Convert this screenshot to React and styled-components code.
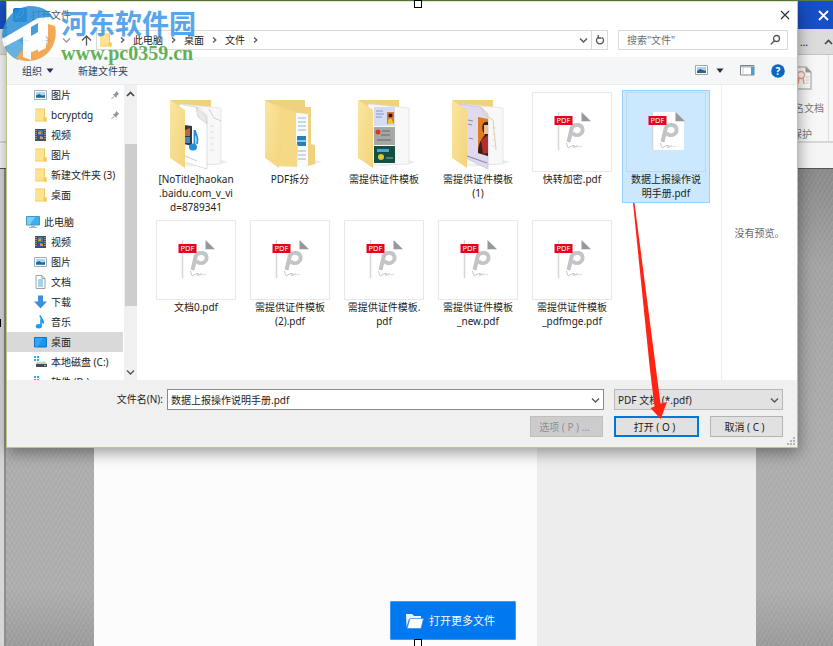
import React from 'react';
import styled, { createGlobalStyle, css } from 'styled-components';

const GlobalStyle = createGlobalStyle`
  * { box-sizing: border-box; }
  html, body { margin: 0; }
  body, button, input, select {
    font-family: "Noto Sans", "Noto Sans CJK SC", sans-serif;
    font-size: 10px;
    line-height: 14px;
    color: #222;
  }
  button { padding: 0; border: 0; background: none; cursor: pointer; }
  svg { display: block; flex: none; }
`;

/* ---------- application window behind the dialog ---------- */

const Page = styled.div`
  position: relative;
  min-height: 100vh;
  display: flex;
  flex-direction: column;
  overflow: hidden;
  background: #d6d6d6;
`;

const AppTitleBar = styled.header`
  height: 29px;
  padding-right: 4px;
  display: flex;
  align-items: center;
  justify-content: flex-end;
  background: #174fc4;
  border-top: 1px solid #5f7d3c;
`;

const AppTabs = styled.div`
  height: 26px;
  display: flex;
  align-items: center;
  justify-content: flex-end;
  gap: 16px;
  background: #dcdcdc;
  border-bottom: 1px solid #c4c4c4;
`;

const Ribbon = styled.div`
  height: 88px;
  display: flex;
  justify-content: flex-end;
  background: #f7f7f7;
  border-bottom: 2px solid #d8d8d8;
`;

const RibbonGroup = styled.div`
  width: 48px;
  margin-right: 4px;
  padding: 11px 4px 0 0;
  display: flex;
  flex-direction: column;
  align-items: flex-end;
  border-right: 1px solid #dedede;
  color: #777;
`;

const RibbonIcon = styled.span`
  padding-right: 12px;
`;

const RibbonText = styled.span`
  margin-top: ${(p) => p.$gap}px;
  padding-right: ${(p) => p.$inset || 0}px;
  white-space: nowrap;
`;

const SubBar = styled.div`
  height: 26px;
  background: #f5f5f5;
  border-bottom: 1px solid #555;
`;

const Workspace = styled.main`
  flex: 1;
  display: flex;
  margin-left: 4px;
  padding: 0 77px 0 88px;
  border-left: 2px solid #8f8f8f;
  background:
    repeating-linear-gradient(60deg, #00000008 0 1px, transparent 1px 4px),
    repeating-linear-gradient(-60deg, #ffffff14 0 1px, transparent 1px 4px),
    linear-gradient(#8a8a8a, #a4a4a4 20%, #aeaeae 60%, #aeaeae 88%, #9c9c9c);
`;

const StartPanel = styled.section`
  flex: 1;
  display: flex;
  flex-direction: column;
  justify-content: flex-end;
  align-items: flex-end;
  padding: 0 21px 6px;
  background: #fcfcfc;
`;

const SidePanel = styled.aside`
  width: 219px;
  background: #ededed;
`;

const OpenMore = styled.button`
  width: 126px;
  height: 39px;
  padding-right: 6px;
  display: flex;
  align-items: center;
  justify-content: center;
  gap: 5px;
  background: #0078f0;
  border: 1px solid #3b98f5;
  border-radius: 1px;
  color: #f4f9ff;
  font-size: 11px;
`;

/* ---------- dialog ---------- */

const Dialog = styled.section`
  position: absolute;
  top: 1px;
  left: 6px;
  right: 35px;
  display: flex;
  flex-direction: column;
  background: #fff;
  border: 1px solid #b5c78c;
  border-top-color: #dfe6cf;
  box-shadow: 1px 5px 14px #00000060;
`;

const TitleBar = styled.header`
  height: 25px;
  padding: 0 7px 0 6px;
  display: flex;
  align-items: center;
  gap: 4px;
  color: #555;
`;

const CloseButton = styled.button`
  margin-left: auto;
`;

const NavBar = styled.div`
  height: 30px;
  padding: 0 9px 4px 12px;
  display: flex;
  align-items: center;
  gap: 10px;
`;

const NavButtons = styled.div`
  width: 73px;
  display: flex;
  align-items: center;
  justify-content: space-between;
`;

const AddressBar = styled.nav`
  flex: 1;
  height: 20px;
  margin-left: -6px;
  padding-left: 2px;
  display: flex;
  align-items: center;
  border: 1px solid #d9d9d9;
`;

const Crumb = styled.a`
  color: #222;
  text-decoration: none;
`;

const CrumbMark = styled.span`
  width: 21px;
  display: flex;
  justify-content: center;
`;

const AddressTools = styled.div`
  margin-left: auto;
  height: 100%;
  display: flex;
  align-items: center;
`;

const AddressTool = styled.button`
  width: 16px;
  height: 100%;
  display: flex;
  align-items: center;
  justify-content: center;
  border-left: 1px solid ${(p) => (p.$divided ? '#d9d9d9' : 'transparent')};
`;

const SearchBox = styled.label`
  width: 170px;
  height: 20px;
  padding: 0 6px 0 8px;
  display: flex;
  align-items: center;
  border: 1px solid #d9d9d9;
`;

const SearchInput = styled.input`
  flex: 1;
  min-width: 0;
  padding: 0;
  border: 0;
  outline: 0;
  background: none;
  &::placeholder { color: #6d6d6d; opacity: 1; }
`;

const Toolbar = styled.div`
  height: 28px;
  padding: 0 12px 0 15px;
  display: flex;
  align-items: center;
  background: #f5f6f7;
  border-bottom: 1px solid #e8ebee;
`;

const ToolButton = styled.button`
  display: flex;
  align-items: center;
  gap: 4px;
  margin-right: ${(p) => p.$after || 0}px;
  color: #2a3e5c;
`;

const ToolSpacer = styled.span`
  flex: 1;
`;

const Browser = styled.div`
  height: 295px;
  display: flex;
`;

const Sidebar = styled.div`
  width: 130px;
  display: flex;
  overflow: hidden;
`;

const Tree = styled.ul`
  flex: 1;
  min-width: 0;
  margin: 0;
  padding: 0;
  list-style: none;
`;

const TreeItem = styled.li`
  height: 20px;
  margin-top: ${(p) => (p.$root ? 7 : 0)}px;
  padding: 0 3px 0 ${(p) => (p.$root ? 19 : 27)}px;
  display: flex;
  align-items: center;
  gap: 4px;
  white-space: nowrap;
  background: ${(p) => (p.$active ? '#d9d9d9' : 'transparent')};
`;

const TreeName = styled.span`
  flex: 1;
`;

const ScrollTrack = styled.div`
  width: 13px;
  display: flex;
  flex-direction: column;
  align-items: center;
  background: #f0f0f0;
  margin-left: 1px;
`;

const ScrollEnd = styled.button`
  height: 17px;
  display: flex;
  align-items: center;
`;

const ScrollThumb = styled.div`
  width: 12px;
  height: 162px;
  margin: 42px 0 auto;
  background: #cdcdcd;
`;

const Files = styled.div`
  flex: 1;
  padding: 5px 9px 0 15px;
  display: grid;
  grid-template-columns: repeat(auto-fill, 88px);
  grid-auto-rows: 127px;
  align-items: start;
  align-content: start;
  gap: 1px 6px;
`;

const Tile = styled.button`
  padding: 1px 3px 2px;
  display: flex;
  flex-direction: column;
  align-items: center;
  border: 1px solid transparent;
  ${(p) => p.$selected && css`
    background: #cce8ff;
    border-color: #99d1ff;
  `}
`;

const Thumb = styled.span`
  width: 80px;
  height: 80px;
  ${(p) => p.$framed && css`
    outline: 1px solid ${p.$selected ? '#bcd9ef' : '#e8e8e8'};
    outline-offset: -1px;
    background: ${p.$selected ? 'transparent' : '#fff'};
  `}
`;

const FileLabel = styled.span`
  text-align: center;
  white-space: pre;
`;

const Preview = styled.aside`
  width: 76px;
  display: flex;
  align-items: center;
  justify-content: center;
  border-left: 1px solid #eee;
  color: #666;
`;

const Footer = styled.footer`
  padding: 9px 14px 10px 0;
  display: flex;
  flex-direction: column;
  gap: 6px;
  background: #f0f0f0;
`;

const FooterRow = styled.div`
  display: flex;
  justify-content: flex-end;
  gap: ${(p) => p.$gap}px;
`;

const NameLabel = styled.label`
  width: 156px;
  line-height: 21px;
  text-align: right;
`;

const Field = styled.div`
  flex: ${(p) => (p.$grow ? '1' : '0 0 169px')};
  height: 21px;
  margin-left: ${(p) => (p.$grow ? 0 : 6)}px;
  padding-right: 3px;
  display: flex;
  align-items: center;
  background: ${(p) => (p.$grow ? '#fff' : '#e2e2e2')};
  border: 1px solid ${(p) => (p.$grow ? '#8a8a8a' : '#b8b8b8')};
`;

const plainField = css`
  flex: 1;
  min-width: 0;
  height: 19px;
  padding: 0 3px;
  border: 0;
  outline: 0;
  background: none;
`;

const NameInput = styled.input`${plainField}`;
const TypeSelect = styled.select`
  ${plainField}
  appearance: none;
`;

const PushButton = styled.button`
  width: ${(p) => (p.$main ? 85 : 73)}px;
  height: 21px;
  padding-right: 4px;
  background: #e1e1e1;
  border: ${(p) => (p.$main ? '2px solid #0078d7' : '1px solid #b4b4b4')};
  &:disabled { background: #ccc; border-color: #bfbfbf; color: #909090; }
`;

/* ---------- things lying over the page ---------- */

const Grip = styled.span`
  position: absolute;
  right: 2px;
  bottom: 2px;
`;

const Pointer = styled.svg`
  position: absolute;
  top: 202px;
  right: 165px;
  pointer-events: none;
`;

const Watermark = styled.div`
  position: absolute;
  top: 6px;
  left: 0;
  display: flex;
  gap: 1px;
  opacity: 0.86;
  pointer-events: none;
`;

const WatermarkText = styled.div`
  display: flex;
  flex-direction: column;
`;

const WatermarkName = styled.span`
  font-size: 27px;
  line-height: 36px;
  font-weight: 700;
  color: #3c98e8;
`;

const WatermarkUrl = styled.span`
  font: 700 20px/22px "Liberation Serif", serif;
  color: #4aa53c;
`;

const Handle = styled.span`
  position: absolute;
  width: 8px;
  height: 8px;
  background: #fff;
  border: 1px solid #000;
  ${(p) => p.$at === 'top' && 'top: 0; left: calc(50% - 3px);'}
  ${(p) => p.$at === 'bottom' && 'bottom: -1px; left: calc(50% - 3px);'}
  ${(p) => p.$at === 'left' && 'top: calc(50% - 4px); left: -7px;'}
`;

/* ---------- icons ---------- */

const Stroke = ({ w, h = w, d, color = '#555', width = 1.3 }) => (
  <svg width={w} height={h} viewBox={`0 0 ${w} ${h}`} fill="none" stroke={color} strokeWidth={width}>
    <path d={d} />
  </svg>
);

const ChevronDown = ({ color }) => <Stroke w={9} h={8} d="M1 2.5 4.5 6 8 2.5" color={color} />;
const ChevronUp = () => <Stroke w={9} h={8} d="M1 6 4.5 2.5 8 6" color="#444" width={1.6} />;
const ChevronRight = () => <Stroke w={5} h={8} d="M1 1.5 3.8 4 1 6.5" />;
const Caret = () => (
  <svg width="8" height="6" viewBox="0 0 8 6"><path d="M.5 .5h7L4 5z" fill="#1d3557" /></svg>
);

const SmallFolder = () => (
  <svg width="13" height="14" viewBox="0 0 13 14">
    <path d="M1 .5h10v9h1.500v4H1z" fill="#f5cc62" />
    <path d="M2 1.500h8v11H1V1z" fill="#ffe391" />
    <path d="M9.500 9.500h3v4h-3z" fill="#f4c957" />
  </svg>
);

const Picture = () => (
  <svg width="13" height="14" viewBox="0 0 13 14">
    <path d="M.5 2.500h12v9H.5z" fill="#fff" stroke="#a3aeb5" />
    <path d="M2 4h9v6H2z" fill="#a9d8f5" />
    <path d="M2 7.500 5 6l3 1.500 3-.5v3H2z" fill="#246a87" />
    <path d="M2 9h9v1H2z" fill="#3e91c8" />
  </svg>
);

const Film = () => (
  <svg width="13" height="14" viewBox="0 0 13 14">
    <path d="M1 1h11v12H1z" fill="#4a4d50" />
    <path d="M4 2h5v5H4z" fill="#3f74b5" /><path d="M4 7h5v5H4z" fill="#28579b" />
    <path d="M4 4.500 7 3v3H4zM6 8l3 1v2H6z" fill="#d99b45" />
    <path d="M2 2v10M11 2v10" stroke="#c9ced2" strokeDasharray="1 1" />
  </svg>
);

const Computer = () => (
  <svg width="14" height="14" viewBox="0 0 14 14">
    <path d="M.5 1.500h13v8.500H.5z" fill="#3eb1f0" stroke="#4e94b9" />
    <path d="M1 2h8L4 9.500H1z" fill="#79d0fb" />
    <path d="M5 10.500h4v1.500h2v1H3v-1h2z" fill="#9fb7c4" />
  </svg>
);

const DocumentIcon = () => (
  <svg width="13" height="14" viewBox="0 0 13 14">
    <path d="M2 .5h6l3 3v10H2z" fill="#fff" stroke="#98a2a8" />
    <path d="M8 .5v3h3" fill="none" stroke="#98a2a8" />
    <path d="M4 5h5M4 7h5M4 9h5M4 11h5" stroke="#4da7d8" />
  </svg>
);

const Download = () => (
  <svg width="13" height="14" viewBox="0 0 13 14">
    <path d="M4 .5h5v6h4L6.500 13.500 0 6.500h4z" fill="#3b90de" />
  </svg>
);

const Music = () => (
  <svg width="13" height="14" viewBox="0 0 13 14">
    <path d="M6 .5c.5 3 4 4 3.200 8-.3-2-1.200-2.800-2.200-3.300V11" fill="none" stroke="#169cf0" strokeWidth="1.600" />
    <ellipse cx="4.800" cy="11.300" rx="3" ry="2.200" fill="#169cf0" />
  </svg>
);

const Desktop = () => (
  <svg width="13" height="14" viewBox="0 0 13 14">
    <path d="M.5 2.500h12v9.500H.5z" fill="#1795f1" stroke="#1177c6" />
    <path d="M1 3h8L4 11.500H1z" fill="#2ca7fa" />
  </svg>
);

const Drive = () => (
  <svg width="13" height="14" viewBox="0 0 13 14">
    <path d="M0 1h2v2H0zM3 1h2v2H3zM0 4h2v2H0zM3 4h2v2H3z" fill="#20b4ef" />
    <path d="m3 7 8-.500 2 2.500H2z" fill="#c6cdd0" /><path d="M2 9h11v3H2z" fill="#454b4e" />
    <path d="M10 10.500h2" stroke="#71d788" />
  </svg>
);

const Pin = () => (
  <svg width="9" height="10" viewBox="0 0 9 10">
    <path d="M5 .8 8.200 4l-1 .4-1.500 1.700-.2 2L1.600 4.300l2-.3L5 2z" fill="#8a98a3" />
    <path d="M3.300 6.200.5 9" stroke="#8a98a3" />
  </svg>
);

const AppLogo = () => (
  <svg width="14" height="14" viewBox="0 0 14 14">
    <rect width="14" height="14" rx="2" fill="#157bdc" />
    <path d="M3 11C4 6 7 3 11 2c0 4-3 7-6 7" fill="none" stroke="#fff" />
  </svg>
);

const SearchIcon = () => (
  <svg width="11" height="12" viewBox="0 0 11 12" fill="none" stroke="#555" strokeWidth="1.300">
    <circle cx="6.500" cy="4.500" r="3" /><path d="M4.300 6.800.8 10.500" />
  </svg>
);

const ViewIcon = () => (
  <svg width="13" height="11" viewBox="0 0 13 11">
    <path d="M.5 .5h12v9H.5z" fill="#fff" stroke="#9da7ad" />
    <path d="M2 2h9v6H2z" fill="#a4d4f2" /><path d="m2 6 3-2 3 1 3 1v2H2z" fill="#2d6580" />
  </svg>
);

const PaneIcon = () => (
  <svg width="15" height="11" viewBox="0 0 15 11">
    <path d="M.5 .5h13.500v9.500H.5z" fill="#fff" stroke="#7c858c" />
    <path d="M1 1h13v1.500H1z" fill="#b6bec4" /><path d="M11 2h3v8h-3z" fill="#46a0dd" />
    <path d="M3 2v8" stroke="#c9ced2" />
  </svg>
);

const HelpIcon = () => (
  <svg width="14" height="14" viewBox="0 0 14 14">
    <circle cx="7" cy="7" r="6.800" fill="#0b67c0" />
    <text x="7" y="10.500" textAnchor="middle" fontSize="10" fontWeight="700" fill="#fff">?</text>
  </svg>
);

const OpenFolder = () => (
  <svg width="19" height="16" viewBox="0 0 19 16">
    <path d="M1 1h6l2 2h7v3H4L1.500 14z" fill="#e8f3ff" />
    <path d="M5 5.500h13.500L16 15.500H2z" fill="#fff" stroke="#3990ee" strokeWidth=".8" />
  </svg>
);

const Certificate = () => (
  <svg width="18" height="24" viewBox="0 0 18 24">
    <path d="M1 1h11l5 5v17H1z" fill="#fbfbfb" stroke="#bbb" strokeWidth="1.500" />
    <path d="M12 1v5h5" fill="#999" stroke="#999" />
    <circle cx="7" cy="9" r="3.500" fill="none" stroke="#ef9f86" strokeWidth="1.500" />
    <path d="m5 12-1 6M9 12l1 6" stroke="#ef9f86" strokeWidth="1.500" />
    <path d="M12 11h3M12 14h3M12 17h3" stroke="#c8c8c8" />
  </svg>
);

const PdfThumb = () => (
  <svg width="80" height="80" viewBox="0 0 80 80">
    <path d="M26 20h23l9 9v29H26z" fill="#fff" />
    <path d="M26.500 20v38" stroke="#d5d6d8" strokeWidth="1.500" />
    <path d="M49.500 20v9.300h9.500z" fill="#96989e" />
    <path d="M39.200 36.500C41 33 44 32.600 46.500 33c4.500.8 5.500 6.500 2 9-3 2.200-7 1.200-8-1.500" fill="none" stroke="#c3c4c8" strokeWidth="3.800" />
    <path d="M39.800 36 36.500 50" stroke="#c3c4c8" strokeWidth="4" />
    <path d="M34.500 51c.5 2.500 1 4 2 5 2-2 4-2.500 6-2.500l-1 2 4-2" fill="none" stroke="#c3c4c8" strokeWidth="1" />
    <path d="M41 55.500c3-1 5-1 9-.8" fill="none" stroke="#d3d4d8" strokeWidth=".8" />
    <path d="M22.500 24h18v9h-18z" fill="#e5041c" />
    <text x="31.500" y="31.200" textAnchor="middle" fontSize="7.500" fill="#fff">PDF</text>
  </svg>
);

const FlapFill = ({ id }) => (
  <linearGradient id={id} x1="0" y1="0" x2="1" y2="1">
    <stop offset="0" stopColor="#fbe5a0" /><stop offset="1" stopColor="#f3d47c" />
  </linearGradient>
);

const FolderThumb = ({ kind }) => {
  const id = `flap-${kind}`;
  const fill = `url(#${id})`;
  return (
    <svg width="80" height="80" viewBox="0 0 80 80">
      <defs><FlapFill id={id} /></defs>
      <path d="m28 75 37-3 7-2-7-2z" fill="#00000014" />
      {kind === 'split' ? (
        <g>
          <path d="M15 8h40v7h6v37l4 1v19l-7 2-30-2z" fill="#efd280" />
          <path d="M40 20l18 2v53l-12-1z" fill="#fafafa" />
          <path d="M48 26h8M48 30h8M48 34h8M48 38h8M48 59h8M48 63h8M48 67h8" stroke="#8fb9d8" />
          <path d="M47 44h9v10h-9z" fill="#2a7fb8" /><path d="M47 48h9v2h-9z" fill="#82cdf0" />
          <path d="m22 11 24 9v32l2 1-1 22-18-1z" fill="#f5d987" />
          <path d="m15 8 14 8 1 36 2 2-3 22-14-10z" fill={fill} />
        </g>
      ) : (
        <g>
          <path d="M14 8h41v12H24z" fill="#efd280" />
          <path d="m24 12 41 4v56l-37 1z" fill="#f8f8f8" stroke="#dedede" strokeWidth=".7" />
          {kind === 'media' && (
            <g>
              <path d="m23 12 21 4 7 8v53L28 70z" fill="#fff" stroke="#d5d5d5" strokeWidth=".8" />
              <path d="m40 15 2 10 9 7-1-8z" fill="#e9e9e9" stroke="#c9c9c9" strokeWidth=".7" />
              <path d="m53 17 5 9 7 3" fill="none" stroke="#d8d2b8" />
              <path d="M54 34h4M54 40h4M54 46h4M54 52h4M54 58h4" stroke="#ddd" />
              <path d="m28 33 8 1v20l-8-2z" fill="#34393e" />
              <path d="m29 38 5-2v8h-5z" fill="#c2663c" /><path d="M29 45h5v6h-5z" fill="#3f8cbb" />
              <path d="M39 38c0 5 4 5 2 14M38.500 38v16" fill="none" stroke="#208ed8" strokeWidth="1.800" />
              <ellipse cx="37" cy="55" rx="4" ry="3.500" fill="#208ed8" />
              <path d="m29 64 12 5" stroke="#ccc" />
            </g>
          )}
          {kind === 'cards' && (
            <g>
              <path d="M30 15h21v19H30z" fill="#d7dcf1" /><path d="M43 20h7v12h-7z" fill="#df7432" />
              <circle cx="46.500" cy="23.500" r="2" fill="#281b16" /><path d="M44 32v-4l3-2 3 6z" fill="#e3c83a" />
              <path d="M32 19h7M32 22h8M32 25h6" stroke="#8498d3" />
              <path d="M30 35h21v18H30z" fill="#a4a9a8" /><circle cx="34" cy="40" r="2.500" fill="#df3425" />
              <path d="M38 39h8M37 43h9M33 48h14" stroke="#666" />
              <path d="M30 54h21v17H30z" fill="#154e42" /><path d="M33 57h12v3H33z" fill="#51a3d3" />
              <circle cx="37" cy="65" r="3" fill="#d9c934" /><path d="M42 66h7" stroke="#79bda6" />
            </g>
          )}
          {kind === 'photo' && (
            <g>
              <path d="m22 12 21 3 7 7v55L28 66z" fill="#e1d9ee" stroke="#c9bddd" strokeWidth=".7" />
              <path d="m43 15 4 8 8 5 3 30" fill="none" stroke="#ddd1a0" />
              <path d="m40 25 10 2v37l-10-3z" fill="#e17b22" />
              <path d="M50 30c-7-2-7 9-3 13-3 3-7 8-7 18l10 3z" fill="#34211e" />
              <path d="m43 48 7-5v18l-5 1z" fill="#b52c2c" /><path d="M46 33h4v9h-4z" fill="#eebf8f" />
              <path d="m30 28 5 1M30 32l4 1M31 46l4 1M29 64l20 7" stroke="#8c8da8" strokeWidth="1.200" />
              <path d="M54 36h4M54 42h4M54 48h4M54 54h4" stroke="#ddd" />
            </g>
          )}
          <path d="m14 8 15 10v58L14 66z" fill={fill} />
        </g>
      )}
    </svg>
  );
};

const WatermarkLogo = () => (
  <svg width="60" height="58" viewBox="0 0 60 58">
    <path d="M2 31C3 13 14 1 30 0c12 0 20 5 24 13l-9-1L5 33z" fill="#2a8fd4" />
    <path d="M4 39c2 7 7 12 14 15l5-4V30z" fill="#4ea5dc" />
    <path d="M55 20c4 18-8 35-27 35-5 0-9-1-12-3l8-10 8 4 9-4 7-4V18z" fill="#f29a38" />
    <path d="M2 33 38 12l12-1 5 5-9 1v25l-8 4V31l-7 4v19l-8-3V31L4 41z" fill="#fff" />
    <path d="m31 21 7-4v9l-7 4z" fill="#2a8fd4" />
  </svg>
);

/* ---------- data ---------- */

const tree = [
  { name: '图片', Icon: Picture, pinned: true },
  { name: 'bcryptdg', Icon: SmallFolder, pinned: true },
  { name: '视频', Icon: Film },
  { name: '图片', Icon: SmallFolder },
  { name: '新建文件夹 (3)', Icon: SmallFolder },
  { name: '桌面', Icon: SmallFolder },
  { name: '此电脑', Icon: Computer, root: true },
  { name: '视频', Icon: Film },
  { name: '图片', Icon: Picture },
  { name: '文档', Icon: DocumentIcon },
  { name: '下载', Icon: Download },
  { name: '音乐', Icon: Music },
  { name: '桌面', Icon: Desktop, active: true },
  { name: '本地磁盘 (C:)', Icon: Drive },
  { name: '软件 (D:)', Icon: Drive },
];

const files = [
  { name: '[NoTitle]haokan\n.baidu.com_v_vi\nd=8789341', folder: 'media' },
  { name: 'PDF拆分', folder: 'split' },
  { name: '需提供证件模板', folder: 'cards' },
  { name: '需提供证件模板\n(1)', folder: 'photo' },
  { name: '快转加密.pdf' },
  { name: '数据上报操作说\n明手册.pdf', selected: true },
  { name: '文档0.pdf' },
  { name: '需提供证件模板\n(2).pdf' },
  { name: '需提供证件模板.\npdf' },
  { name: '需提供证件模板\n_new.pdf' },
  { name: '需提供证件模板\n_pdfmge.pdf' },
];

const crumbs = ['此电脑', '桌面', '文件'];

export default function App() {
  return (
    <Page>
      <GlobalStyle />
      <AppTitleBar>
        <button aria-label="关闭程序"><Stroke w={11} d="M1 1l9 9M10 1l-9 9" color="#fff" width={1.8} /></button>
      </AppTitleBar>
      <AppTabs><span>...</span><ChevronUp /></AppTabs>
      <Ribbon>
        <RibbonGroup>
          <RibbonIcon><Certificate /></RibbonIcon>
          <RibbonText $gap={11}>签名文档</RibbonText>
          <RibbonText $gap={12} $inset={12}>保护</RibbonText>
        </RibbonGroup>
      </Ribbon>
      <SubBar />
      <Workspace>
        <StartPanel>
          <OpenMore><OpenFolder />打开更多文件</OpenMore>
        </StartPanel>
        <SidePanel />
      </Workspace>

      <Dialog role="dialog" aria-label="打开文件">
        <TitleBar>
          <AppLogo />
          <span>打开文件</span>
          <CloseButton aria-label="关闭"><Stroke w={10} d="M1 1l8 8M9 1l-8 8" color="#333" width={1.2} /></CloseButton>
        </TitleBar>
        <NavBar>
          <NavButtons>
            <button aria-label="后退"><Stroke w={11} d="M10 5.500H1M5 1.500l-4 4 4 4" color="#888" /></button>
            <button aria-label="前进"><Stroke w={11} d="M1 5.500h9M6 1.500l4 4-4 4" color="#bbb" /></button>
            <ChevronDown color="#999" />
            <button aria-label="上移"><Stroke w={11} d="M5.500 10.500V1M1 5.500l4.500-4.500L10 5.500" /></button>
          </NavButtons>
          <AddressBar aria-label="路径">
            <SmallFolder />
            <CrumbMark><ChevronRight /></CrumbMark>
            {crumbs.map((c) => (
              <React.Fragment key={c}>
                <Crumb href="#">{c}</Crumb>
                <CrumbMark><ChevronRight /></CrumbMark>
              </React.Fragment>
            ))}
            <AddressTools>
              <AddressTool aria-label="历史"><ChevronDown /></AddressTool>
              <AddressTool $divided aria-label="刷新">
                <Stroke w={10} d="M3 2.500a3.500 3.500 0 1 0 4 0M3.200 0v3h3.300" />
              </AddressTool>
            </AddressTools>
          </AddressBar>
          <SearchBox>
            <SearchInput aria-label="搜索" placeholder={'搜索"文件"'} />
            <SearchIcon />
          </SearchBox>
        </NavBar>
        <Toolbar>
          <ToolButton $after={24}>组织<Caret /></ToolButton>
          <ToolButton>新建文件夹</ToolButton>
          <ToolSpacer />
          <ToolButton $after={8} aria-label="视图"><ViewIcon /></ToolButton>
          <ToolButton $after={16} aria-label="更多选项"><Caret /></ToolButton>
          <ToolButton $after={16} aria-label="预览窗格"><PaneIcon /></ToolButton>
          <ToolButton aria-label="帮助"><HelpIcon /></ToolButton>
        </Toolbar>

        <Browser>
          <Sidebar>
            <Tree>
              {tree.map(({ name, Icon, pinned, root, active }, i) => (
                <TreeItem key={i} $root={root} $active={active}>
                  <Icon />
                  <TreeName>{name}</TreeName>
                  {pinned && <Pin />}
                </TreeItem>
              ))}
            </Tree>
            <ScrollTrack>
              <ScrollEnd aria-label="向上滚动"><ChevronUp /></ScrollEnd>
              <ScrollThumb />
              <ScrollEnd aria-label="向下滚动"><ChevronDown /></ScrollEnd>
            </ScrollTrack>
          </Sidebar>
          <Files>
            {files.map(({ name, folder, selected }) => (
              <Tile key={name} $selected={selected} aria-pressed={!!selected}>
                <Thumb $framed={!folder} $selected={selected}>
                  {folder ? <FolderThumb kind={folder} /> : <PdfThumb />}
                </Thumb>
                <FileLabel>{name}</FileLabel>
              </Tile>
            ))}
          </Files>
          <Preview>没有预览。</Preview>
        </Browser>

        <Footer>
          <FooterRow $gap={4}>
            <NameLabel htmlFor="file-name">文件名(N):</NameLabel>
            <Field $grow>
              <NameInput id="file-name" defaultValue="数据上报操作说明手册.pdf" />
              <ChevronDown />
            </Field>
            <Field>
              <TypeSelect aria-label="文件类型"><option>PDF 文档 (*.pdf)</option></TypeSelect>
              <ChevronDown />
            </Field>
          </FooterRow>
          <FooterRow $gap={11}>
            <PushButton disabled>选项 ( P ) ...</PushButton>
            <PushButton $main>打开 ( O )</PushButton>
            <PushButton>取消 ( C )</PushButton>
          </FooterRow>
        </Footer>
        <Grip>
          <svg width="8" height="8" viewBox="0 0 8 8" fill="#b5b5b5">
            <path d="M6 0h2v2H6zM3 3h2v2H3zM6 3h2v2H6zM0 6h2v2H0zM3 6h2v2H3zM6 6h2v2H6z" />
          </svg>
        </Grip>
      </Dialog>

      <Pointer width="36" height="218" viewBox="0 0 36 218">
        <path d="M1 1h1.500L28.500 201.500l6.500-1.500-6.300 17L18.500 206l4-1.500L18 168z" fill="#ff2413" />
      </Pointer>

      <Watermark>
        <WatermarkLogo />
        <WatermarkText>
          <WatermarkName>河东软件园</WatermarkName>
          <WatermarkUrl>www.pc0359.cn</WatermarkUrl>
        </WatermarkText>
      </Watermark>

      <Handle $at="top" />
      <Handle $at="bottom" />
      <Handle $at="left" />
    </Page>
  );
}
